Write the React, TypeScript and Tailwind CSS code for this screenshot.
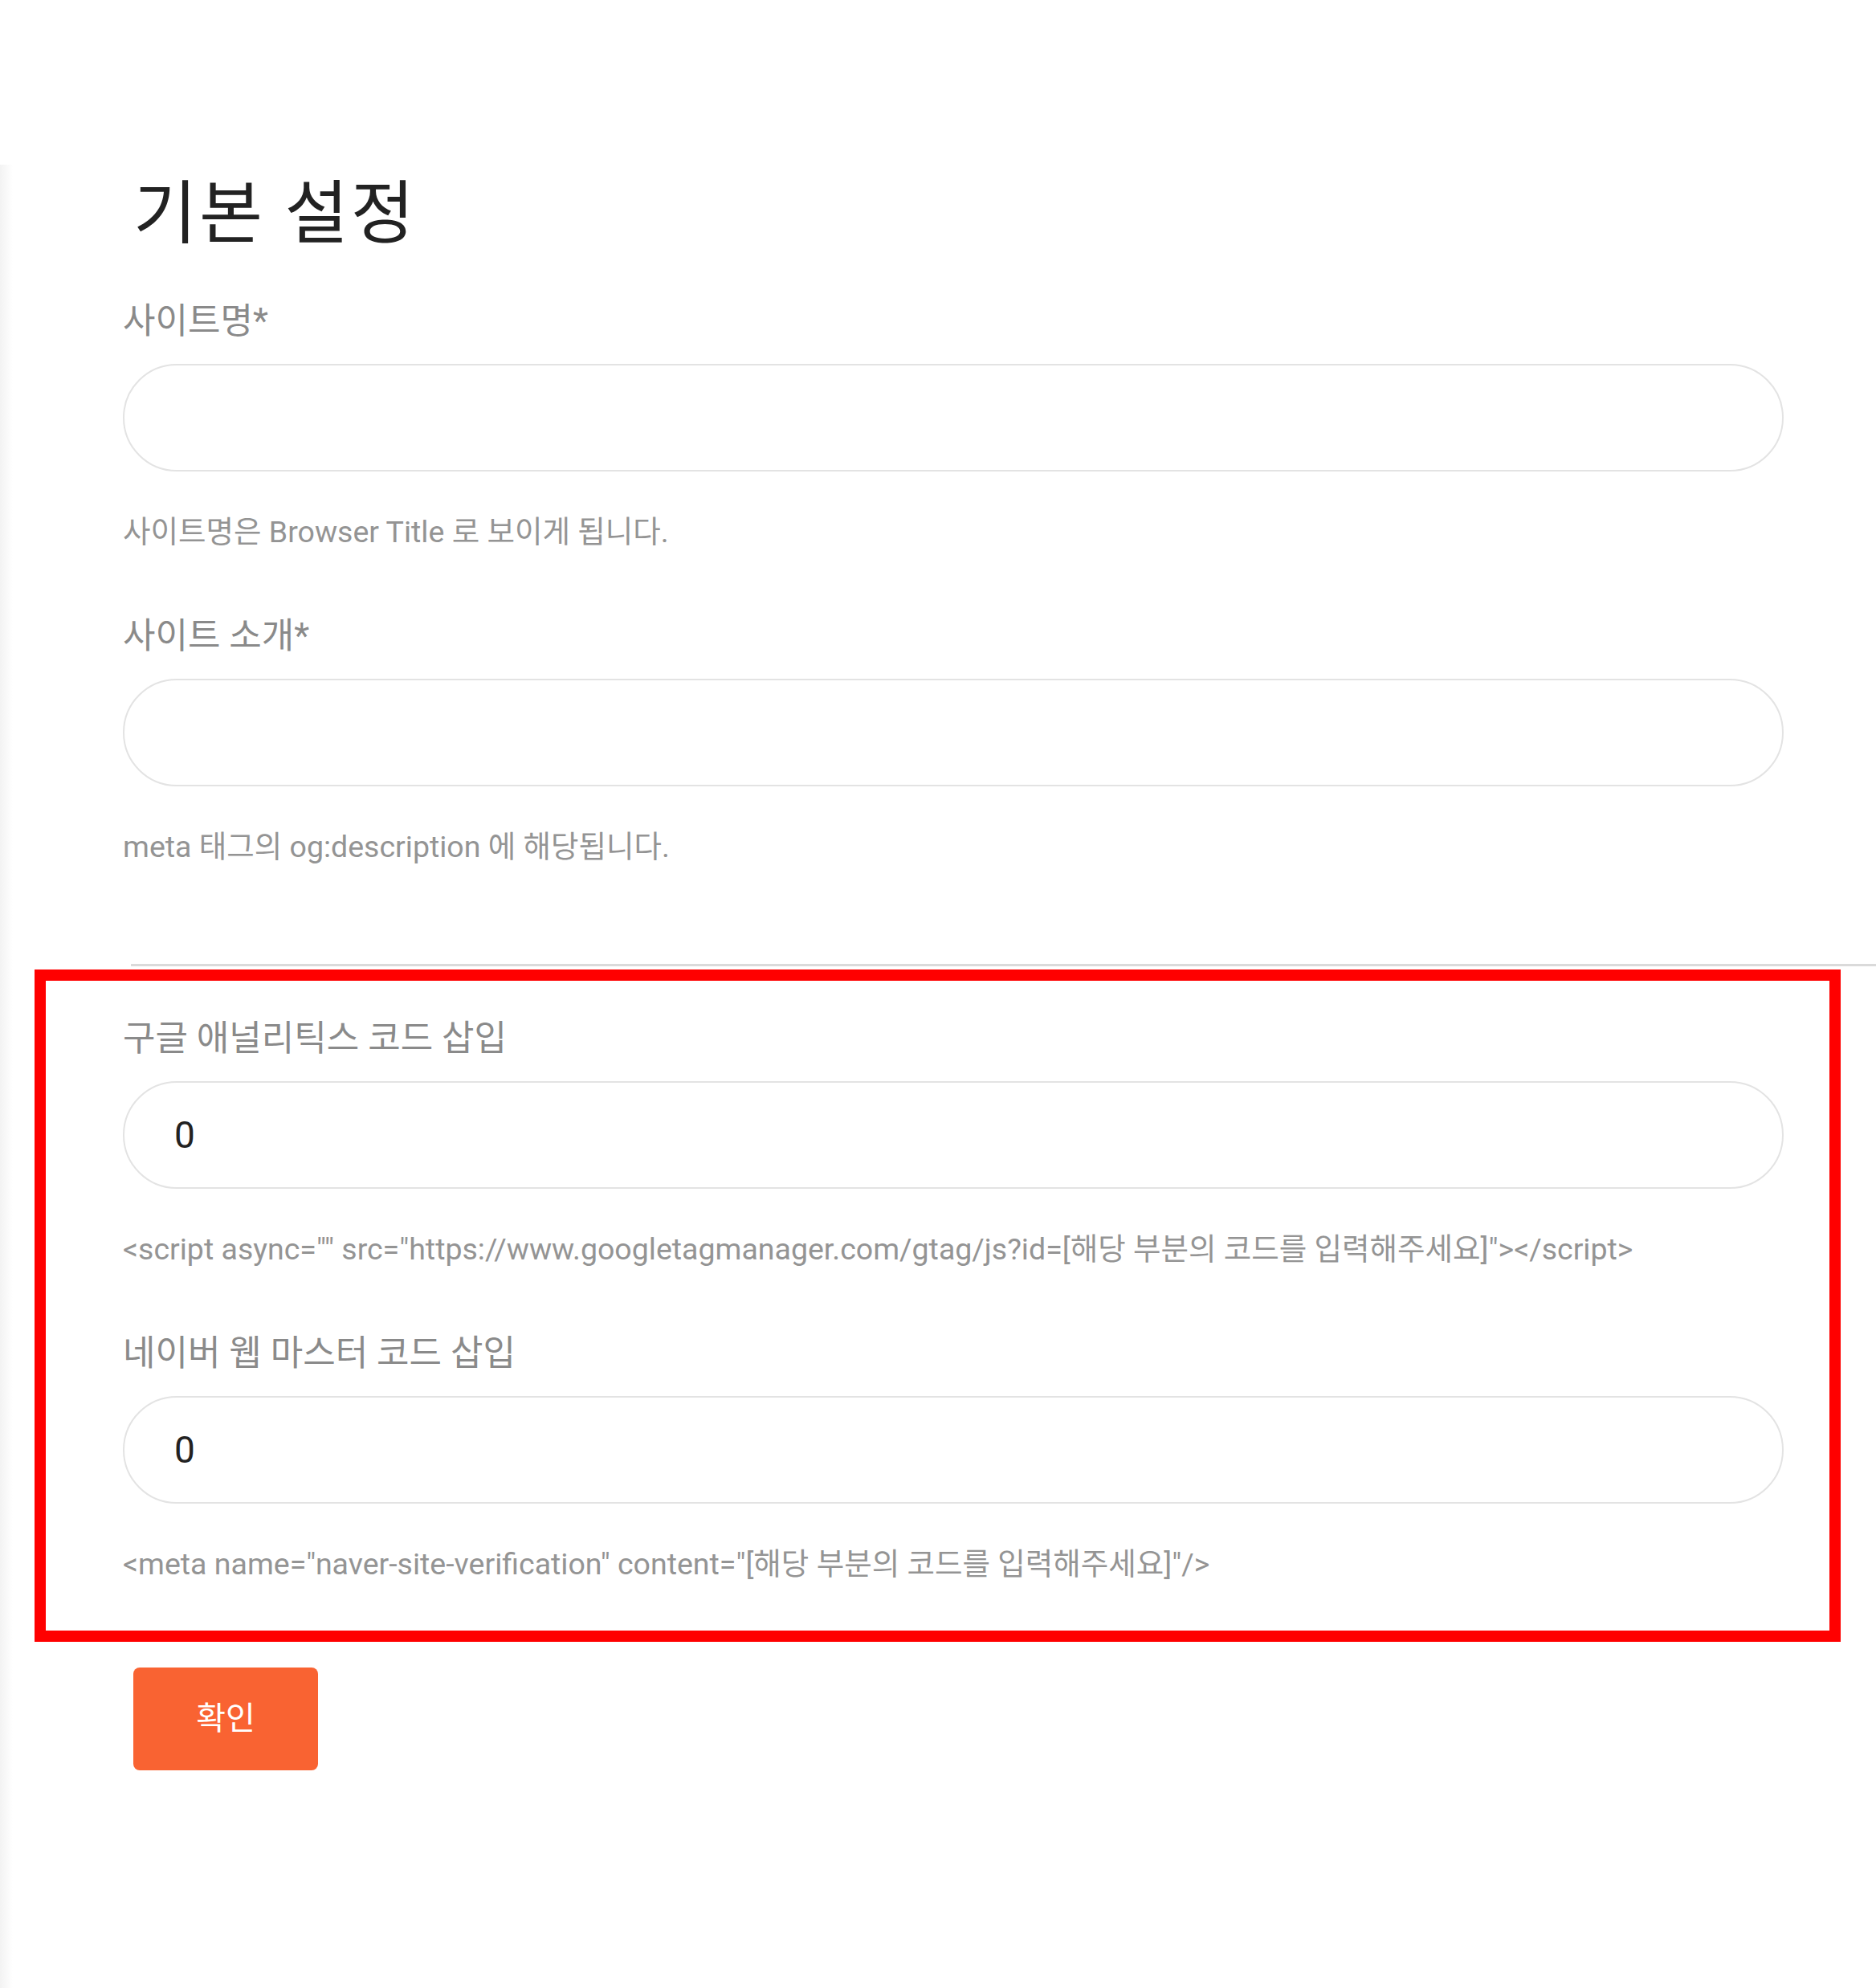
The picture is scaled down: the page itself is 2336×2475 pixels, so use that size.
import React from "react";

const KR = { fontFamily: 'Roboto, "Noto Sans CJK KR", sans-serif' };

function Field({ label, help, value }: { label: string; help: string; value?: string }) {
  return (
    <div className="flex flex-col">
      <div className="h-[50px] leading-[50px] text-[44px] text-[#8a8a8a] whitespace-nowrap">{label}</div>
      <input
        readOnly
        defaultValue={value ?? ""}
        className="mt-[28px] h-[134px] w-full rounded-full border-2 border-[#e3e3e3] bg-white pl-[62px] text-[46px] text-[#222] outline-none"
        style={KR}
      />
      <div className="mt-[53px] h-[44px] leading-[44px] text-[37.5px] text-[#949494] whitespace-nowrap">{help}</div>
    </div>
  );
}

export default function App() {
  return (
    <div className="flex min-h-[2475px] w-[2336px] bg-white" style={KR}>
      <div className="mt-[205px] w-[16px] bg-gradient-to-r from-[#f3f3f3] to-white" />
      <div className="flex flex-1 flex-col pl-[137px] pr-[115px] pt-[224px]">
        <h1 className="ml-[13px] h-[86px] leading-[86px] text-[86px] font-normal text-[#222] tracking-[3px]">기본 설정</h1>
        <div className="mt-[65px] flex flex-col">
          <Field label="사이트명*" help="사이트명은 Browser Title 로 보이게 됩니다." />
          <div className="mt-[83px]">
            <Field label="사이트 소개*" help="meta 태그의 og:description 에 해당됩니다." />
          </div>
        </div>
        <div className="ml-[10px] mr-[-115px] mt-[124px] h-[3px] bg-[#dadada]" />
        <div className="ml-[-110px] mr-[-71px] mt-[4px] border-[14px] border-[#ff0000] pl-[96px] pr-[57px] pt-[47px] pb-[61px]">
          <Field
            label="구글 애널리틱스 코드 삽입"
            value="0"
            help={'<script async="" src="https://www.googletagmanager.com/gtag/js?id=[해당 부분의 코드를 입력해주세요]"></script>'}
          />
          <div className="mt-[83px]">
            <Field
              label="네이버 웹 마스터 코드 삽입"
              value="0"
              help={'<meta name="naver-site-verification" content="[해당 부분의 코드를 입력해주세요]"/>'}
            />
          </div>
        </div>
        <button className="ml-[13px] mt-[32px] flex h-[128px] w-[230px] items-center justify-center rounded-[8px] bg-[#f96332] text-[40px] text-white">
          확인
        </button>
      </div>
    </div>
  );
}
